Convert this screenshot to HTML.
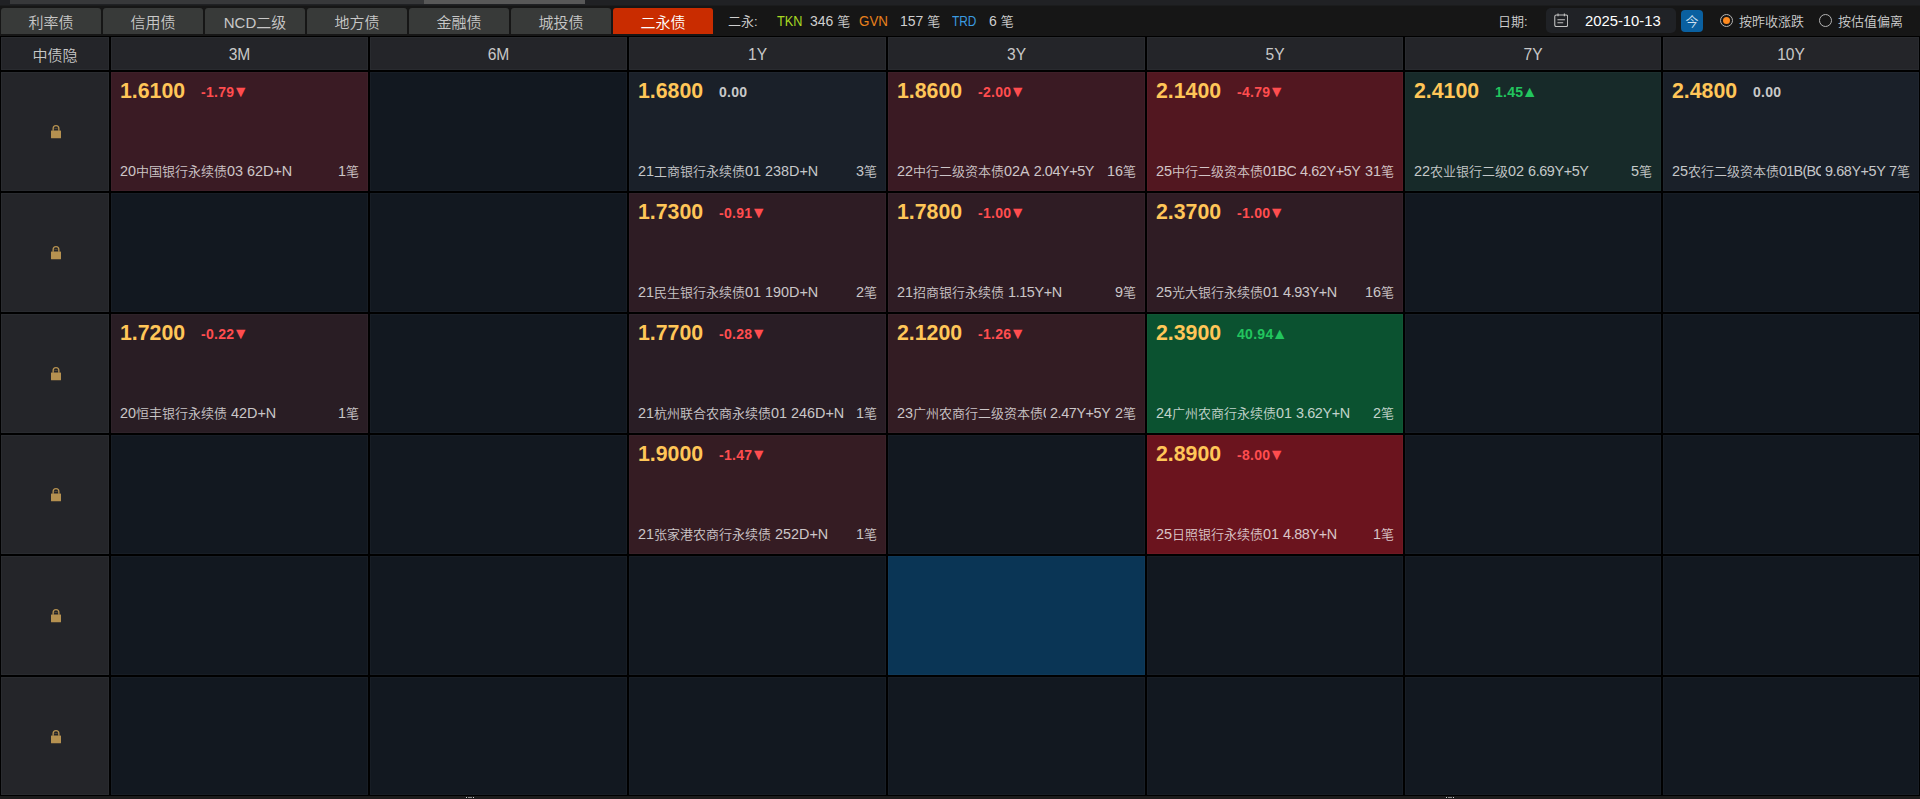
<!DOCTYPE html><html lang="zh-CN"><head><meta charset="utf-8"><title>二永债</title><style>
*{margin:0;padding:0;box-sizing:border-box}
html,body{width:1920px;height:799px;overflow:hidden;background:#000}
body{position:relative;font-family:"Liberation Sans","Noto Sans CJK SC",sans-serif;color:#c8c8c8;font-size:13px;line-height:1;font-weight:350}
.strip{position:absolute;left:0;top:0;width:1920px;height:8px;background:linear-gradient(#1b1c1d 0 6px,#161616 6px)}
.strip:before{content:"";position:absolute;left:0;top:0;width:1920px;height:5px;background:#202124}
.strip .s1{position:absolute;left:10px;top:0;width:414px;height:4px;background:#37383a}
.strip .s2{position:absolute;left:424px;top:0;width:161px;height:4px;background:#585858}
.tabs{position:absolute;left:0;top:8px;width:1920px;height:28px;background:#161616}
.tab{position:absolute;top:0;width:100px;height:26px;background:#383a39;border-radius:3px 3px 0 0;color:#c8c8c8;font-size:15px;line-height:26px;text-align:center;padding-top:2px}
.tab.on{background:#c92c00;color:#fff}
.tb{position:absolute;top:9px;height:26px;line-height:26px;white-space:nowrap;font-size:13px;color:#cfcfcf}
.grid{position:absolute;left:0;top:36px;width:1920px;height:760px;background:#000}
.grid>div{position:absolute}
.h{top:1px;height:33px;background:#242529;color:#c8c8c8;font-size:15.6px;line-height:33px;padding-top:1px;text-align:center;box-shadow:inset 0 0 0 1px #292b2f}
.k{left:1px;width:108px;background:#242529;margin-top:-36px;box-shadow:inset 0 0 0 1px #292b2f}
.k svg{position:absolute;left:49px;top:52px}
.c{background:#121820;margin-top:-36px;box-shadow:inset 0 0 0 1px rgba(255,255,255,.022)}
.c>div{position:absolute;white-space:nowrap}
.p{left:9px;top:7px;font-size:21.3px;font-weight:bold;color:#ffc658;line-height:24px}
.g{left:90px;top:12px;font-size:14px;font-weight:bold;line-height:16px;letter-spacing:.3px}
.g.d{color:#ff4d4f}.g.u{color:#22c55e}.g.z{color:#c8c8c8}
.ar{font-weight:normal;font-size:16px;line-height:16px;margin-left:-1.8px;letter-spacing:0;vertical-align:0}
.b{left:9px;right:9px;top:90px;height:18px;display:flex;font-size:13px;line-height:18px;color:rgba(255,255,255,.76)}
.n{max-width:149px;overflow:hidden;flex:none}
.t{margin-left:4px;flex:none}
.q{margin-left:auto;flex:none}
.l{font-size:14.4px}
.t.y .l{letter-spacing:-.4px}
.foot{position:absolute;left:0;top:796px;width:1920px;height:3px;background:#1c1c1c}
.foot i{position:absolute;top:1px;width:8px;height:1px;background:linear-gradient(90deg,#d0d0d0 0 1px,transparent 1px 2px,#8a8a8a 2px 6px,transparent 6px 7px,#d0d0d0 7px 8px)}
.date{position:absolute;left:1546px;top:8px;width:130px;height:25px;background:#202226;border-radius:5px}
.date svg{position:absolute;left:7.6px;top:4.8px;width:14.4px;height:14.4px}
.date span{position:absolute;left:39px;top:0;line-height:26px;font-size:14.8px;color:#fff}
.today{position:absolute;left:1681px;top:10px;width:22px;height:22px;border-radius:4px;background:#0a60a0;color:#cfe0f0;font-size:13px;line-height:24px;text-align:center}
.rd{position:absolute;top:14px;width:13px;height:13px;border-radius:50%;border:1.2px solid #b4b4b4}
.rd.on:after{content:"";position:absolute;left:1.6px;top:1.6px;width:7.4px;height:7.4px;border-radius:50%;background:#ff8a1f}
.h.z{font-size:15px;padding-top:2px}
.l2{font-size:14px}
.cap{display:inline-block;font-size:14.4px;transform:scaleX(.885);transform-origin:0 50%}

</style></head><body>
<div class="strip"><i class="s1"></i><i class="s2"></i></div>
<div class="tabs">
<div class="tab" style="left:1px">利率债</div>
<div class="tab" style="left:103px">信用债</div>
<div class="tab" style="left:205px">NCD二级</div>
<div class="tab" style="left:307px">地方债</div>
<div class="tab" style="left:409px">金融债</div>
<div class="tab" style="left:511px">城投债</div>
<div class="tab on" style="left:613px">二永债</div>
</div>
<div class="tb" style="left:728px">二永:</div>
<div class="tb" style="left:777px;top:8px;color:#a8d822"><span class="cap">TKN</span></div>
<div class="tb" style="left:810px;top:8px"><span class="l2">346 </span>笔</div>
<div class="tb" style="left:859px;top:8px;color:#e8801c"><span class="cap" style="transform:scaleX(.93)">GVN</span></div>
<div class="tb" style="left:900px;top:8px"><span class="l2">157 </span>笔</div>
<div class="tb" style="left:952px;top:8px;color:#3b9be0"><span class="cap" style="transform:scaleX(.825)">TRD</span></div>
<div class="tb" style="left:989px;top:8px"><span class="l2">6 </span>笔</div>
<div class="tb" style="left:1498px">日期:</div>
<div class="date"><svg width="15" height="15" viewBox="0 0 15 15" fill="none" stroke="#c4c4c4" stroke-width="1.1"><rect x=".8" y="2" width="13.4" height="12.2" rx="1.6"/><path d="M4.2.4v3M10.8.4v3M3.6 7h7.8M3.6 10.2h6"/></svg><span>2025-10-13</span></div>
<div class="today">今</div>
<div class="rd on" style="left:1720px"></div><div class="tb" style="left:1739px">按昨收涨跌</div>
<div class="rd" style="left:1819px"></div><div class="tb" style="left:1838px">按估值偏离</div>

<div class="grid">
<div class="h z" style="left:1px;width:108px">中债隐</div>
<div class="h" style="left:111px;width:257px">3M</div>
<div class="h" style="left:370px;width:257px">6M</div>
<div class="h" style="left:629px;width:257px">1Y</div>
<div class="h" style="left:888px;width:257px">3Y</div>
<div class="h" style="left:1147px;width:256px">5Y</div>
<div class="h" style="left:1405px;width:256px">7Y</div>
<div class="h" style="left:1663px;width:256px">10Y</div>
<div class="k" style="top:72px;height:119px"><svg width="12" height="15" viewBox="0 0 12 15"><rect x="1" y="6.5" width="10" height="7.7" rx=".5" fill="#b59150"/><path d="M3.15 6.8V4.4a2.85 2.85 0 0 1 5.7 0v2.4" fill="none" stroke="#b59150" stroke-width="1.35"/><path d="M4.4 4.5h3.2" stroke="#b59150" stroke-width="1" opacity=".35"/></svg></div>
<div class="c" style="left:111px;top:72px;width:257px;height:119px;background:#3a1b24"><div class="p">1.6100</div><div class="g d">-1.79<b class="ar">▼</b></div><div class="b"><span class="n"><span class="l">20</span>中国银行永续债<span class="l">03</span></span><span class="t"><span class="l">62D+N</span></span><span class="q"><span class="l">1</span>笔</span></div></div>
<div class="c" style="left:370px;top:72px;width:257px;height:119px;"></div>
<div class="c" style="left:629px;top:72px;width:257px;height:119px;background:#1a2029"><div class="p">1.6800</div><div class="g z">0.00</div><div class="b"><span class="n"><span class="l">21</span>工商银行永续债<span class="l">01</span></span><span class="t"><span class="l">238D+N</span></span><span class="q"><span class="l">3</span>笔</span></div></div>
<div class="c" style="left:888px;top:72px;width:257px;height:119px;background:#3a1a23"><div class="p">1.8600</div><div class="g d">-2.00<b class="ar">▼</b></div><div class="b"><span class="n"><span class="l">22</span>中行二级资本债<span class="l">02A</span></span><span class="t y"><span class="l">2.04Y+5Y</span></span><span class="q"><span class="l">16</span>笔</span></div></div>
<div class="c" style="left:1147px;top:72px;width:256px;height:119px;background:#521720"><div class="p">2.1400</div><div class="g d">-4.79<b class="ar">▼</b></div><div class="b"><span class="n"><span class="l">25</span>中行二级资本债<span class="l" style="letter-spacing:-.75px">01BC</span></span><span class="t y"><span class="l">4.62Y+5Y</span></span><span class="q"><span class="l">31</span>笔</span></div></div>
<div class="c" style="left:1405px;top:72px;width:256px;height:119px;background:#172a29"><div class="p">2.4100</div><div class="g u">1.45<b class="ar">▲</b></div><div class="b"><span class="n"><span class="l">22</span>农业银行二级<span class="l">02</span></span><span class="t y"><span class="l">6.69Y+5Y</span></span><span class="q"><span class="l">5</span>笔</span></div></div>
<div class="c" style="left:1663px;top:72px;width:256px;height:119px;background:#1a2029"><div class="p">2.4800</div><div class="g z">0.00</div><div class="b"><span class="n"><span class="l">25</span>农行二级资本债<span class="l" style="letter-spacing:-.75px">01B(BC</span></span><span class="t y"><span class="l">9.68Y+5Y</span></span><span class="q"><span class="l">7</span>笔</span></div></div>
<div class="k" style="top:193px;height:119px"><svg width="12" height="15" viewBox="0 0 12 15"><rect x="1" y="6.5" width="10" height="7.7" rx=".5" fill="#b59150"/><path d="M3.15 6.8V4.4a2.85 2.85 0 0 1 5.7 0v2.4" fill="none" stroke="#b59150" stroke-width="1.35"/><path d="M4.4 4.5h3.2" stroke="#b59150" stroke-width="1" opacity=".35"/></svg></div>
<div class="c" style="left:111px;top:193px;width:257px;height:119px;"></div>
<div class="c" style="left:370px;top:193px;width:257px;height:119px;"></div>
<div class="c" style="left:629px;top:193px;width:257px;height:119px;background:#2e1c24"><div class="p">1.7300</div><div class="g d">-0.91<b class="ar">▼</b></div><div class="b"><span class="n"><span class="l">21</span>民生银行永续债<span class="l">01</span></span><span class="t"><span class="l">190D+N</span></span><span class="q"><span class="l">2</span>笔</span></div></div>
<div class="c" style="left:888px;top:193px;width:257px;height:119px;background:#2f1c24"><div class="p">1.7800</div><div class="g d">-1.00<b class="ar">▼</b></div><div class="b"><span class="n"><span class="l">21</span>招商银行永续债</span><span class="t y"><span class="l">1.15Y+N</span></span><span class="q"><span class="l">9</span>笔</span></div></div>
<div class="c" style="left:1147px;top:193px;width:256px;height:119px;background:#2f1c24"><div class="p">2.3700</div><div class="g d">-1.00<b class="ar">▼</b></div><div class="b"><span class="n"><span class="l">25</span>光大银行永续债<span class="l">01</span></span><span class="t y"><span class="l">4.93Y+N</span></span><span class="q"><span class="l">16</span>笔</span></div></div>
<div class="c" style="left:1405px;top:193px;width:256px;height:119px;"></div>
<div class="c" style="left:1663px;top:193px;width:256px;height:119px;"></div>
<div class="k" style="top:314px;height:119px"><svg width="12" height="15" viewBox="0 0 12 15"><rect x="1" y="6.5" width="10" height="7.7" rx=".5" fill="#b59150"/><path d="M3.15 6.8V4.4a2.85 2.85 0 0 1 5.7 0v2.4" fill="none" stroke="#b59150" stroke-width="1.35"/><path d="M4.4 4.5h3.2" stroke="#b59150" stroke-width="1" opacity=".35"/></svg></div>
<div class="c" style="left:111px;top:314px;width:257px;height:119px;background:#291d24"><div class="p">1.7200</div><div class="g d">-0.22<b class="ar">▼</b></div><div class="b"><span class="n"><span class="l">20</span>恒丰银行永续债</span><span class="t"><span class="l">42D+N</span></span><span class="q"><span class="l">1</span>笔</span></div></div>
<div class="c" style="left:370px;top:314px;width:257px;height:119px;"></div>
<div class="c" style="left:629px;top:314px;width:257px;height:119px;background:#291d25"><div class="p">1.7700</div><div class="g d">-0.28<b class="ar">▼</b></div><div class="b"><span class="n"><span class="l">21</span>杭州联合农商永续债<span class="l">01</span></span><span class="t"><span class="l">246D+N</span></span><span class="q"><span class="l">1</span>笔</span></div></div>
<div class="c" style="left:888px;top:314px;width:257px;height:119px;background:#331c23"><div class="p">2.1200</div><div class="g d">-1.26<b class="ar">▼</b></div><div class="b"><span class="n"><span class="l">23</span>广州农商行二级资本债<span class="l">0</span></span><span class="t y"><span class="l">2.47Y+5Y</span></span><span class="q"><span class="l">2</span>笔</span></div></div>
<div class="c" style="left:1147px;top:314px;width:256px;height:119px;background:#0b5230"><div class="p">2.3900</div><div class="g u">40.94<b class="ar">▲</b></div><div class="b"><span class="n"><span class="l">24</span>广州农商行永续债<span class="l">01</span></span><span class="t y"><span class="l">3.62Y+N</span></span><span class="q"><span class="l">2</span>笔</span></div></div>
<div class="c" style="left:1405px;top:314px;width:256px;height:119px;"></div>
<div class="c" style="left:1663px;top:314px;width:256px;height:119px;"></div>
<div class="k" style="top:435px;height:119px"><svg width="12" height="15" viewBox="0 0 12 15"><rect x="1" y="6.5" width="10" height="7.7" rx=".5" fill="#b59150"/><path d="M3.15 6.8V4.4a2.85 2.85 0 0 1 5.7 0v2.4" fill="none" stroke="#b59150" stroke-width="1.35"/><path d="M4.4 4.5h3.2" stroke="#b59150" stroke-width="1" opacity=".35"/></svg></div>
<div class="c" style="left:111px;top:435px;width:257px;height:119px;"></div>
<div class="c" style="left:370px;top:435px;width:257px;height:119px;"></div>
<div class="c" style="left:629px;top:435px;width:257px;height:119px;background:#351c23"><div class="p">1.9000</div><div class="g d">-1.47<b class="ar">▼</b></div><div class="b"><span class="n"><span class="l">21</span>张家港农商行永续债</span><span class="t"><span class="l">252D+N</span></span><span class="q"><span class="l">1</span>笔</span></div></div>
<div class="c" style="left:888px;top:435px;width:257px;height:119px;"></div>
<div class="c" style="left:1147px;top:435px;width:256px;height:119px;background:#6b141e"><div class="p">2.8900</div><div class="g d">-8.00<b class="ar">▼</b></div><div class="b"><span class="n"><span class="l">25</span>日照银行永续债<span class="l">01</span></span><span class="t y"><span class="l">4.88Y+N</span></span><span class="q"><span class="l">1</span>笔</span></div></div>
<div class="c" style="left:1405px;top:435px;width:256px;height:119px;"></div>
<div class="c" style="left:1663px;top:435px;width:256px;height:119px;"></div>
<div class="k" style="top:556px;height:119px"><svg width="12" height="15" viewBox="0 0 12 15"><rect x="1" y="6.5" width="10" height="7.7" rx=".5" fill="#b59150"/><path d="M3.15 6.8V4.4a2.85 2.85 0 0 1 5.7 0v2.4" fill="none" stroke="#b59150" stroke-width="1.35"/><path d="M4.4 4.5h3.2" stroke="#b59150" stroke-width="1" opacity=".35"/></svg></div>
<div class="c" style="left:111px;top:556px;width:257px;height:119px;"></div>
<div class="c" style="left:370px;top:556px;width:257px;height:119px;"></div>
<div class="c" style="left:629px;top:556px;width:257px;height:119px;"></div>
<div class="c" style="left:888px;top:556px;width:257px;height:119px;background:#0a3555"></div>
<div class="c" style="left:1147px;top:556px;width:256px;height:119px;"></div>
<div class="c" style="left:1405px;top:556px;width:256px;height:119px;"></div>
<div class="c" style="left:1663px;top:556px;width:256px;height:119px;"></div>
<div class="k" style="top:677px;height:118px"><svg width="12" height="15" viewBox="0 0 12 15"><rect x="1" y="6.5" width="10" height="7.7" rx=".5" fill="#b59150"/><path d="M3.15 6.8V4.4a2.85 2.85 0 0 1 5.7 0v2.4" fill="none" stroke="#b59150" stroke-width="1.35"/><path d="M4.4 4.5h3.2" stroke="#b59150" stroke-width="1" opacity=".35"/></svg></div>
<div class="c" style="left:111px;top:677px;width:257px;height:118px;"></div>
<div class="c" style="left:370px;top:677px;width:257px;height:118px;"></div>
<div class="c" style="left:629px;top:677px;width:257px;height:118px;"></div>
<div class="c" style="left:888px;top:677px;width:257px;height:118px;"></div>
<div class="c" style="left:1147px;top:677px;width:256px;height:118px;"></div>
<div class="c" style="left:1405px;top:677px;width:256px;height:118px;"></div>
<div class="c" style="left:1663px;top:677px;width:256px;height:118px;"></div>
</div>
<div class="foot"><i style="left:466px"></i><i style="left:1446px"></i></div>
</body></html>
